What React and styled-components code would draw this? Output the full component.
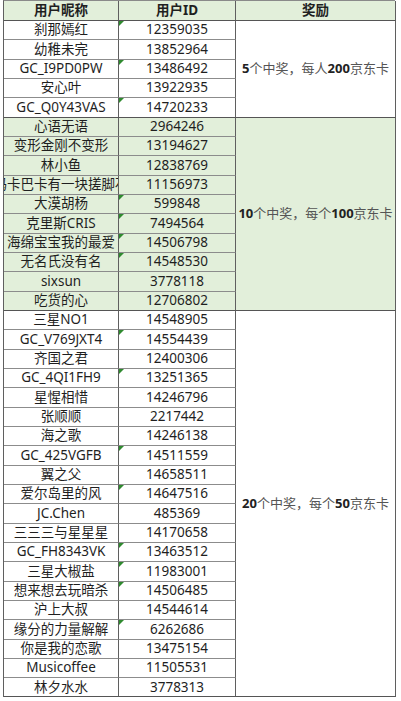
import styled, { createGlobalStyle } from 'styled-components';

const GlobalStyle = createGlobalStyle`
    html, body {
        margin: 0;
        padding: 0;
        background: #ffffff;
    }
    body {
        font-family: "Noto Sans", "Noto Sans CJK SC", sans-serif;
        color: #1f1f1f;
    }
`;

const groups = [
    {
        reward: ['5', '个中奖，每人', '200', '京东卡'],
        shaded: false,
        rows: [
            ['刹那嫣红', '12359035', true],
            ['幼稚未完', '13852964', false],
            ['GC_I9PD0PW', '13486492', true],
            ['安心叶', '13922935', false],
            ['GC_Q0Y43VAS', '14720233', true],
        ],
    },
    {
        reward: ['10', '个中奖，每个', '100', '京东卡'],
        shaded: true,
        rows: [
            ['心语无语', '2964246', false],
            ['变形金刚不变形', '13194627', false],
            ['林小鱼', '12838769', false],
            ['玛卡巴卡有一块搓脚石', '11156973', false],
            ['大漠胡杨', '599848', true],
            ['克里斯CRIS', '7494564', true],
            ['海绵宝宝我的最爱', '14506798', true],
            ['无名氏没有名', '14548530', true],
            ['sixsun', '3778118', false],
            ['吃货的心', '12706802', false],
        ],
    },
    {
        reward: ['20', '个中奖，每个', '50', '京东卡'],
        shaded: false,
        rows: [
            ['三星NO1', '14548905', false],
            ['GC_V769JXT4', '14554439', true],
            ['齐国之君', '12400306', false],
            ['GC_4QI1FH9', '13251365', true],
            ['星惺相惜', '14246796', false],
            ['张顺顺', '2217442', false],
            ['海之歌', '14246138', false],
            ['GC_425VGFB', '14511559', true],
            ['翼之父', '14658511', false],
            ['爱尔岛里的风', '14647516', true],
            ['JC.Chen', '485369', false],
            ['三三三与星星星', '14170658', false],
            ['GC_FH8343VK', '13463512', true],
            ['三星大椒盐', '11983001', true],
            ['想来想去玩暗杀', '14506485', true],
            ['沪上大叔', '14544614', false],
            ['缘分的力量解解', '6262686', true],
            ['你是我的恋歌', '13475154', false],
            ['Musicoffee', '11505531', false],
            ['林夕水水', '3778313', false],
        ],
    },
];

const Page = styled.div`
    padding-left: 3px;
    width: 398px;
    height: 701px;
    box-sizing: border-box;
`;

const Sheet = styled.div`
    display: grid;
    grid-template-columns: 115px 117px 160px;
    grid-template-rows: 20px repeat(35, 19.343px);
    border-left: 1px solid #5f5f5f;
    border-top: 1px solid #8a8a8a;
    width: 392px;
    box-sizing: border-box;
`;

const Cell = styled.div`
    position: relative;
    display: flex;
    align-items: center;
    justify-content: center;
    overflow: hidden;
    white-space: nowrap;
    box-sizing: border-box;
    border-right: 1px solid #5f5f5f;
    border-bottom: 1px solid ${(p) => (p.$strong ? '#555555' : '#8c8c8c')};
    background: ${(p) => (p.$shaded ? '#e2efda' : '#ffffff')};
    font-size: 13.5px;
    line-height: 1;
`;

const HeadCell = styled(Cell)`
    background: #e2efda;
    font-weight: 700;
    border-bottom: 1px solid #555555;
    font-size: 13.5px;
`;

const RewardCell = styled(Cell)`
    grid-column: 3;
    grid-row: span ${(p) => p.$span};
    border-bottom: 1px solid #555555;
    font-size: 13px;
`;

const Num = styled.span`
    font-weight: 700;
    color: #222222;
`;

const Word = styled.span`
    color: #555555;
    font-weight: 400;
`;

// excel "number stored as text" marker
const Flag = styled.span`
    position: absolute;
    top: 0;
    left: 0;
    width: 0;
    height: 0;
    border-top: 5px solid #2f8a2f;
    border-right: 5px solid transparent;
`;

export default function App() {
    return (
        <Page>
            <GlobalStyle />
            <Sheet>
                <HeadCell>用户昵称</HeadCell>
                <HeadCell>用户ID</HeadCell>
                <HeadCell>奖励</HeadCell>
                {groups.map((g, gi) =>
                    g.rows.map(([name, id, flag], ri) => {
                        const last = ri === g.rows.length - 1;
                        return [
                            <Cell
                                key={`n_${gi}_${ri}`}
                                $shaded={g.shaded}
                                $strong={last}
                            >
                                {name}
                            </Cell>,
                            <Cell
                                key={`i_${gi}_${ri}`}
                                $shaded={g.shaded}
                                $strong={last}
                            >
                                {flag && <Flag />}
                                {id}
                            </Cell>,
                            ri === 0 && (
                                <RewardCell
                                    key={`r_${gi}`}
                                    $span={g.rows.length}
                                    $shaded={g.shaded}
                                >
                                    <Num>{g.reward[0]}</Num>
                                    <Word>{g.reward[1]}</Word>
                                    <Num>{g.reward[2]}</Num>
                                    <Word>{g.reward[3]}</Word>
                                </RewardCell>
                            ),
                        ];
                    })
                )}
            </Sheet>
        </Page>
    );
}
